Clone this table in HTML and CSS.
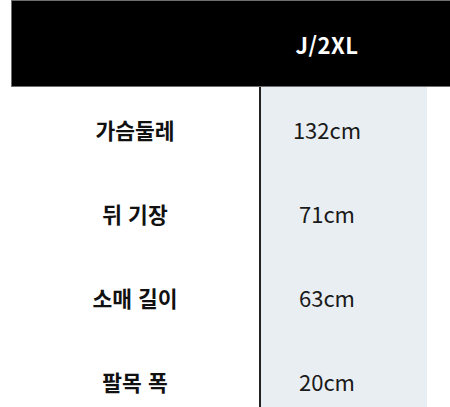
FILE: index.html
```html
<!DOCTYPE html>
<html lang="ko">
<head>
<meta charset="utf-8">
<link rel="stylesheet" href="styles.css">
</head>
<body>
<div class="sheet">
  <div class="head">
    <div class="head-label"></div>
    <div class="head-size">J/2XL</div>
  </div>
  <div class="row">
    <div class="label">가슴둘레</div>
    <div class="divider"></div>
    <div class="value">132cm</div>
  </div>
  <div class="row">
    <div class="label">뒤 기장</div>
    <div class="divider"></div>
    <div class="value">71cm</div>
  </div>
  <div class="row">
    <div class="label">소매 길이</div>
    <div class="divider"></div>
    <div class="value">63cm</div>
  </div>
  <div class="row">
    <div class="label">팔목 폭</div>
    <div class="divider"></div>
    <div class="value">20cm</div>
  </div>
</div>
</body>
</html>
```
FILE: styles.css
```css
html, body {
  margin: 0;
  padding: 0;
  background: #ffffff;
  overflow: hidden;
}
body {
  font-family: "Noto Sans CJK KR", "Noto Sans", sans-serif;
  color: #1a1a1a;
}
.sheet {
  padding-left: 11px;
  width: 439px;
}
.head {
  display: grid;
  grid-template-columns: 248px 168px 1fr;
  height: 85px;
  background: #000000;
  border: 1px solid #6e6e6e;
  border-right: none;
  align-items: center;
}
.head-size {
  color: #ffffff;
  font-weight: 700;
  font-size: 22px;
  letter-spacing: 0.5px;
  text-align: center;
  padding-right: 34px;
  line-height: 1;
}
.row {
  display: grid;
  grid-template-columns: 248px 2px 166px;
  height: 84px;
}
.label {
  display: flex;
  align-items: center;
  justify-content: center;
  font-weight: 700;
  font-size: 21.5px;
  color: #111111;
}
.divider {
  background: #222222;
}
.value {
  display: flex;
  align-items: center;
  justify-content: center;
  padding-right: 34px;
  background: #e9eef2;
  font-size: 22px;
  font-weight: 400;
  color: #1a1a1a;
}
```
